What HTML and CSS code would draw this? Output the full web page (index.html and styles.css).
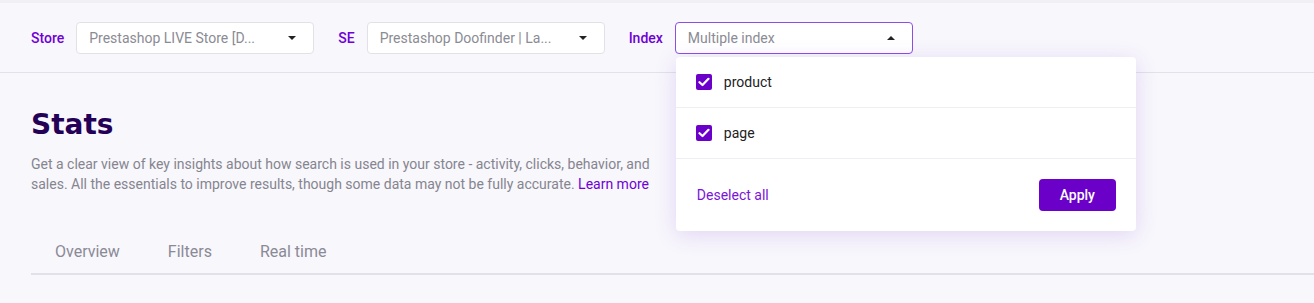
FILE: index.html
```html
<!DOCTYPE html>
<html lang="en">
<head>
<meta charset="utf-8">
<title>Stats</title>
<link rel="stylesheet" href="styles.css">
</head>
<body>
<div class="topstrip"></div>
<header class="header">
  <div class="filter">
    <span class="filter-label">Store</span>
    <div class="select">
      <span class="select-text">Prestashop LIVE Store [D...</span>
      <span class="caret"></span>
    </div>
  </div>
  <div class="filter">
    <span class="filter-label">SE</span>
    <div class="select">
      <span class="select-text">Prestashop Doofinder | La...</span>
      <span class="caret"></span>
    </div>
  </div>
  <div class="filter filter-index">
    <span class="filter-label">Index</span>
    <div class="select select-open">
      <span class="select-text">Multiple index</span>
      <span class="caret caret-up"></span>
      <div class="dropdown">
        <label class="option">
          <span class="checkbox"><svg width="12" height="10" viewBox="0 0 12 10"><path d="M1.5 5.2 L4.5 8 L10.5 1.8" fill="none" stroke="#fff" stroke-width="2.2" stroke-linecap="round" stroke-linejoin="round"/></svg></span>
          <span class="option-text">product</span>
        </label>
        <label class="option">
          <span class="checkbox"><svg width="12" height="10" viewBox="0 0 12 10"><path d="M1.5 5.2 L4.5 8 L10.5 1.8" fill="none" stroke="#fff" stroke-width="2.2" stroke-linecap="round" stroke-linejoin="round"/></svg></span>
          <span class="option-text">page</span>
        </label>
        <div class="dropdown-footer">
          <a class="deselect" href="#">Deselect all</a>
          <button class="apply" type="button">Apply</button>
        </div>
      </div>
    </div>
  </div>
</header>
<main class="main">
  <h1 class="title">Stats</h1>
  <p class="desc">Get a clear view of key insights about how search is used in your store - activity, clicks, behavior, and sales. All the essentials to improve results, though some data may not be fully accurate. <a class="learn" href="#">Learn more</a></p>
  <nav class="tabs">
    <span class="tab">Overview</span>
    <span class="tab">Filters</span>
    <span class="tab">Real time</span>
  </nav>
</main>
</body>
</html>
```

FILE: styles.css
```css
* { box-sizing: border-box; }
html, body { margin: 0; padding: 0; }
body {
  background: #f8f7fc;
  font-family: Roboto, "Liberation Sans", sans-serif;
  color: #222;
  height: 303px;
  overflow: hidden;
}
.topstrip {
  height: 3px;
  background: #f1f0f5;
}
.header {
  display: flex;
  align-items: center;
  padding: 19px 31px 18px;
  border-bottom: 1px solid #e3e1ea;
}
.filter {
  display: flex;
  align-items: center;
  gap: 12px;
  margin-right: 24px;
}
.filter-label {
  font-size: 14px;
  font-weight: 500;
  color: #6f00d6;
}
.select {
  position: relative;
  width: 238px;
  height: 32px;
  background: #fff;
  border: 1px solid #e2e1e8;
  border-radius: 4px;
  display: flex;
  align-items: center;
  justify-content: space-between;
  padding: 0 17px 0 12px;
}
.select-open {
  border-color: #8b4ee6;
}
.select-text {
  font-size: 14px;
  color: #8b8b94;
}
.caret {
  width: 0;
  height: 0;
  border-left: 4px solid transparent;
  border-right: 4px solid transparent;
  border-top: 4px solid #222;
}
.caret-up {
  border-top: 0;
  border-bottom: 4px solid #222;
}
.dropdown {
  position: absolute;
  top: 34px;
  left: 0;
  width: 460px;
  background: #fff;
  border-radius: 4px;
  box-shadow: 0 4px 22px rgba(110, 40, 200, 0.16);
  z-index: 10;
}
.option {
  display: flex;
  align-items: center;
  gap: 12px;
  height: 51px;
  padding: 0 20px;
  border-bottom: 1px solid #efeef2;
}
.checkbox {
  width: 16px;
  height: 16px;
  border-radius: 2px;
  background: #6b00c9;
  display: flex;
  align-items: center;
  justify-content: center;
}
.option-text {
  font-size: 14px;
  color: #222;
}
.dropdown-footer {
  display: flex;
  align-items: center;
  justify-content: space-between;
  height: 72px;
  padding: 0 20px 0 21px;
}
.deselect {
  font-size: 14px;
  color: #7a14d9;
  text-decoration: none;
}
.apply {
  width: 77px;
  height: 32px;
  border: 0;
  border-radius: 4px;
  background: #6b00c8;
  color: #fff;
  font-family: Roboto, "Liberation Sans", sans-serif;
  font-size: 14px;
  font-weight: 500;
}
.main {
  padding: 0 0 0 31px;
}
.title {
  margin: 34px 0 0;
  font-family: "DejaVu Sans", Lato, sans-serif;
  font-weight: 700;
  font-size: 28px;
  line-height: 36px;
  color: #240057;
}
.desc {
  margin: 11px 0 0;
  max-width: 630px;
  font-size: 14px;
  line-height: 20px;
  color: #85858f;
}
.learn {
  color: #6f00d6;
  text-decoration: none;
}
.tabs {
  display: flex;
  margin-top: 39px;
  border-bottom: 2px solid #e2e1e8;
}
.tab {
  padding: 9px 24px 11px;
  font-size: 16px;
  line-height: 20px;
  color: #8a8a96;
}
```
